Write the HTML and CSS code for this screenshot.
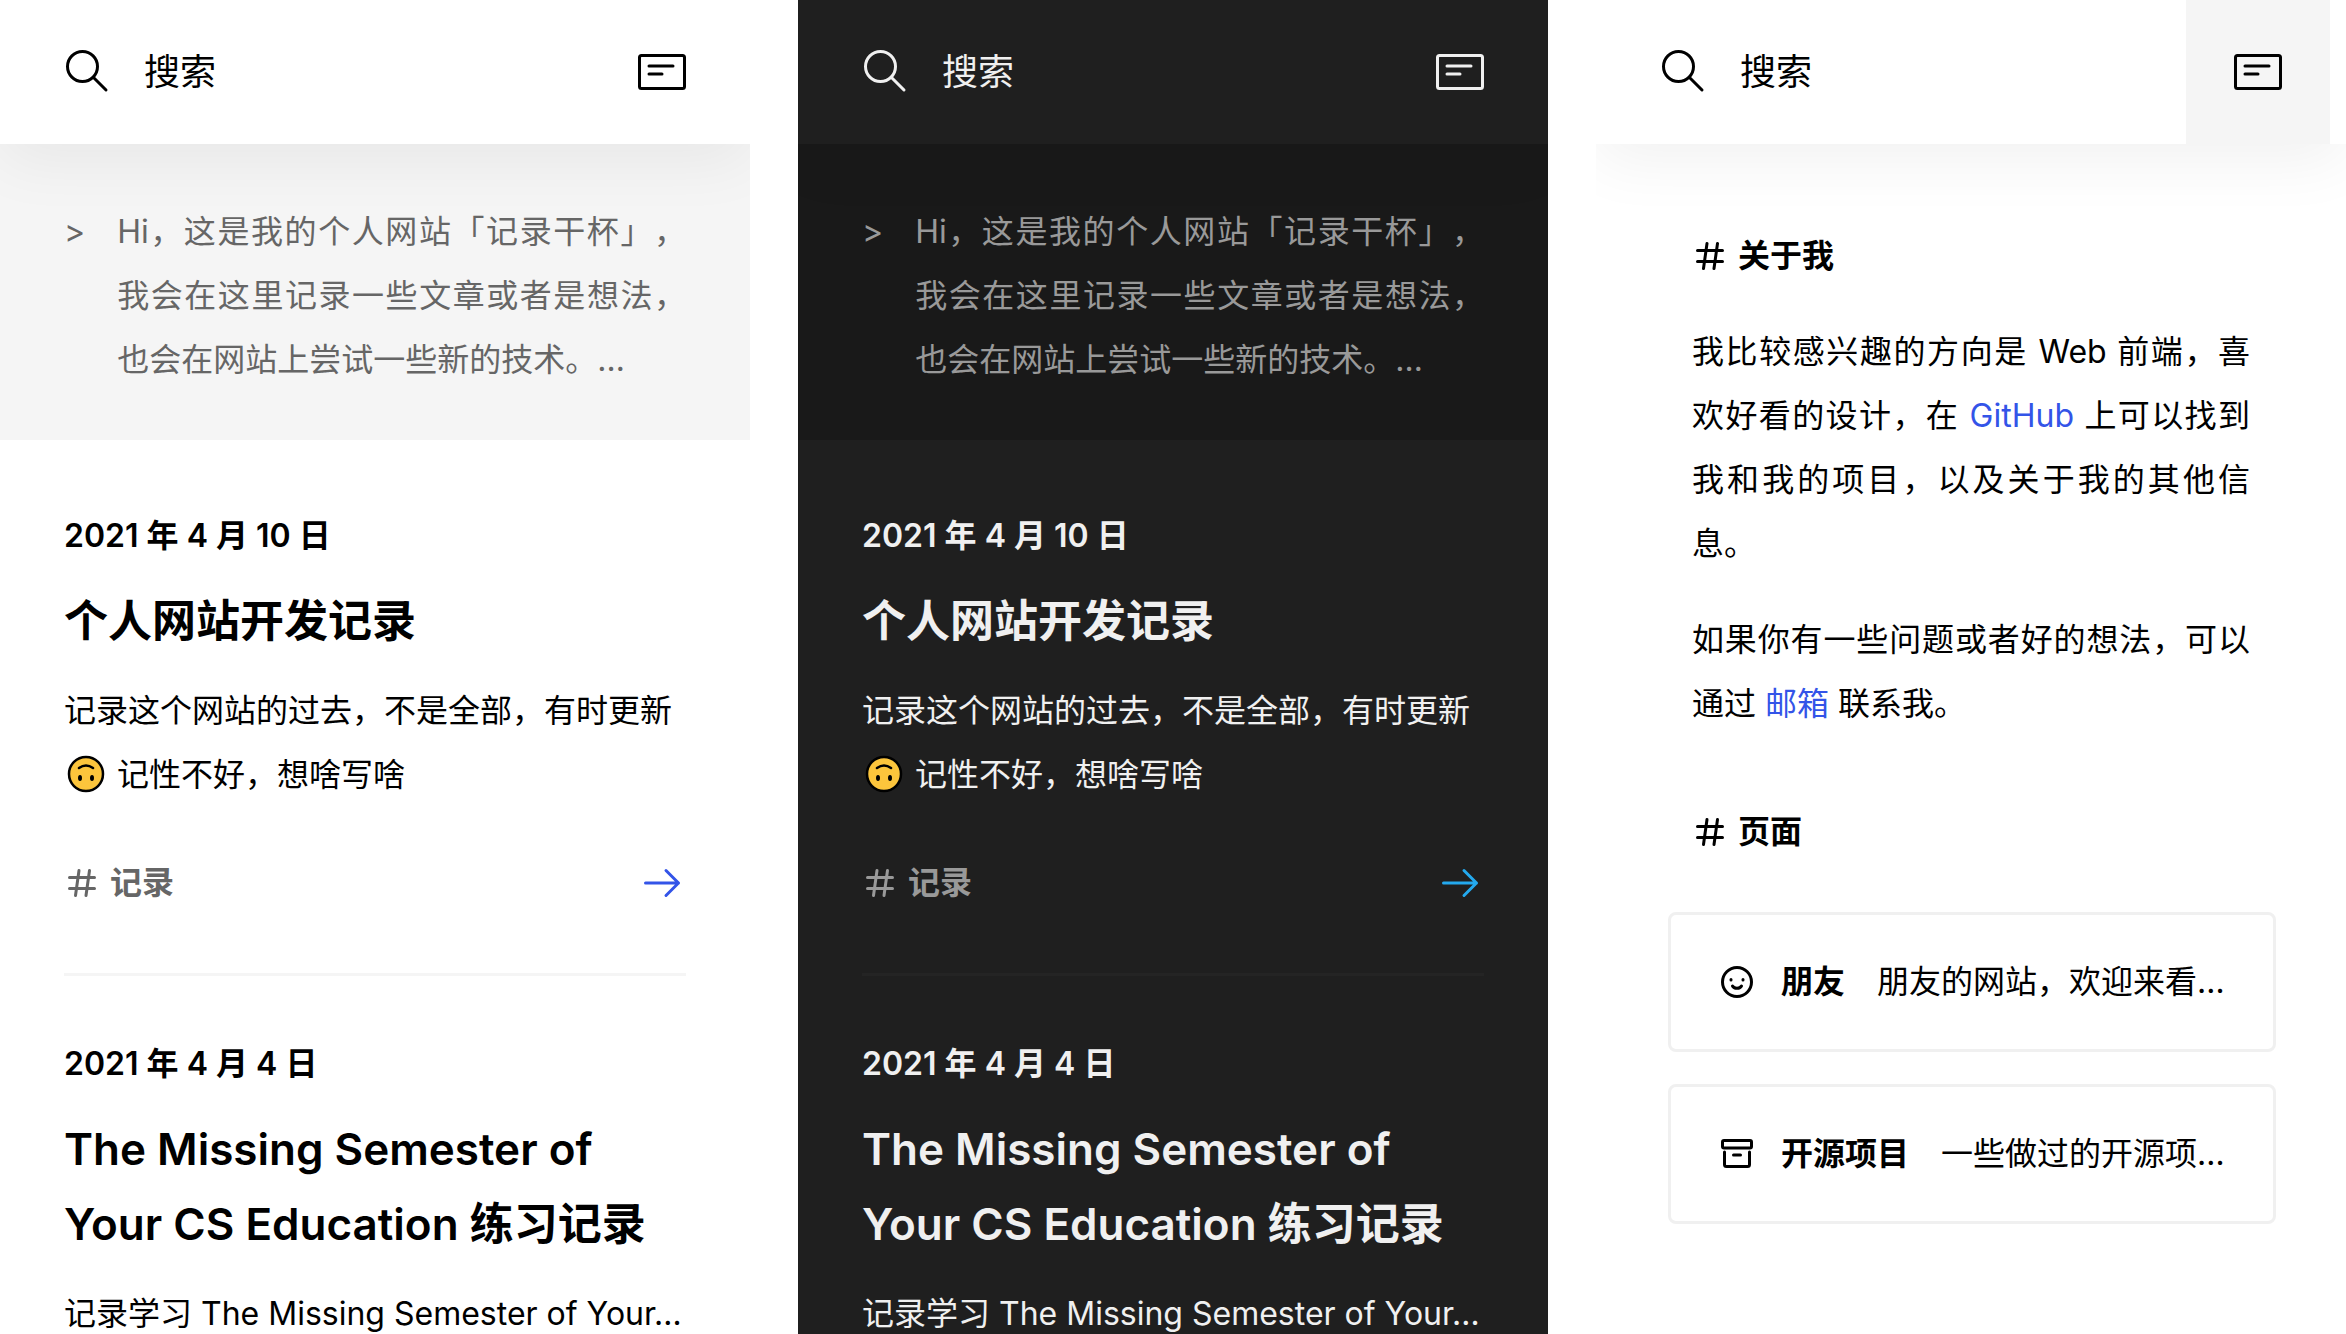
FILE: index.html
```html
<!DOCTYPE html>
<html lang="zh-CN">
<head>
    <meta charset="UTF-8">
    <meta name="viewport" content="width=device-width, initial-scale=1.0">
    <title>记录干杯</title>
    <link rel="stylesheet" href="styles.css">
</head>
<body>
    <!-- shared icons -->
    <svg class="sprite" aria-hidden="true">
        <symbol id="icon-search" viewBox="0 0 48 48">
            <circle cx="18.500" cy="18.500" r="15"/>
            <path d="M29.500 29.500L42 42"/>
        </symbol>
        <symbol id="icon-menu" viewBox="0 0 48 36">
            <rect x="1.5" y="1.5" width="45" height="33" rx="2"/>
            <path d="M11 12H35M11 20H24"/>
        </symbol>
        <symbol id="icon-hash" viewBox="0 0 36 36">
            <path d="M5.500 12.500H30.500M5.500 23.500H30.500M15 5.500L11.500 30.500M25.500 5.500L22 30.500"/>
        </symbol>
        <symbol id="icon-arrow" viewBox="0 0 48 48">
            <path d="M7.500 24H40.500M28 11.500L40.500 24L28 36.500"/>
        </symbol>
        <symbol id="icon-smile" viewBox="0 0 36 36">
            <circle cx="18" cy="18" r="14.5"/>
            <path d="M13.500 22C15 25 21 25 22.500 22M12 15.500V16M24 15.500V16"/>
        </symbol>
        <symbol id="icon-archive" viewBox="0 0 36 36">
            <rect x="3.500" y="4.500" width="29" height="7.500" rx="1.500"/>
            <path d="M5.500 16V28.500Q5.500 30.500 7.500 30.500H28.500Q30.500 30.500 30.500 28.500V16M14.500 19H21.500"/>
        </symbol>
        <symbol id="icon-flip" viewBox="0 0 40 40">
            <circle cx="20" cy="20" r="17" fill="#fcc53c" stroke="#000" stroke-width="2.500"/>
            <path d="M13 14Q20 9 27 14" fill="none" stroke="#000" stroke-width="2.500" stroke-linecap="round"/>
            <ellipse cx="14" cy="24" rx="2" ry="3" fill="#000"/>
            <ellipse cx="26" cy="24" rx="2" ry="3" fill="#000"/>
        </symbol>
    </svg>

    <div class="screens">
        <section class="screen">
            <header class="topbar">
                <button class="search"><svg class="icon icon-search"><use href="#icon-search"/></svg>搜索</button>
                <button class="menu" aria-label="菜单"><svg class="icon icon-menu"><use href="#icon-menu"/></svg></button>
            </header>
            <div class="intro">
                <span>&gt;</span>
                <p>Hi，这是我的个人网站「记录干杯」，我会在这里记录一些文章或者是想法，也会在网站上尝试一些新的技术。…</p>
            </div>
            <main class="posts">
                <article class="post">
                    <time class="date" datetime="2021-04-10">2021 年 4 月 10 日</time>
                    <h2>个人网站开发记录</h2>
                    <p>记录这个网站的过去，不是全部，有时更新 <svg class="emoji"><use href="#icon-flip"/></svg> 记性不好，想啥写啥</p>
                    <footer>
                        <a class="tag" href="#"><svg class="icon icon-hash"><use href="#icon-hash"/></svg>记录</a>
                        <a class="more" href="#" aria-label="阅读"><svg class="icon icon-arrow"><use href="#icon-arrow"/></svg></a>
                    </footer>
                </article>
                <article class="post">
                    <time class="date" datetime="2021-04-04">2021 年 4 月 4 日</time>
                    <h2>The Missing Semester of Your CS Education 练习记录</h2>
                    <p>记录学习 The Missing Semester of Your…</p>
                </article>
            </main>
        </section>

        <section class="screen dark">
            <header class="topbar">
                <button class="search"><svg class="icon icon-search"><use href="#icon-search"/></svg>搜索</button>
                <button class="menu" aria-label="菜单"><svg class="icon icon-menu"><use href="#icon-menu"/></svg></button>
            </header>
            <div class="intro">
                <span>&gt;</span>
                <p>Hi，这是我的个人网站「记录干杯」，我会在这里记录一些文章或者是想法，也会在网站上尝试一些新的技术。…</p>
            </div>
            <main class="posts">
                <article class="post">
                    <time class="date" datetime="2021-04-10">2021 年 4 月 10 日</time>
                    <h2>个人网站开发记录</h2>
                    <p>记录这个网站的过去，不是全部，有时更新 <svg class="emoji"><use href="#icon-flip"/></svg> 记性不好，想啥写啥</p>
                    <footer>
                        <a class="tag" href="#"><svg class="icon icon-hash"><use href="#icon-hash"/></svg>记录</a>
                        <a class="more" href="#" aria-label="阅读"><svg class="icon icon-arrow"><use href="#icon-arrow"/></svg></a>
                    </footer>
                </article>
                <article class="post">
                    <time class="date" datetime="2021-04-04">2021 年 4 月 4 日</time>
                    <h2>The Missing Semester of Your CS Education 练习记录</h2>
                    <p>记录学习 The Missing Semester of Your…</p>
                </article>
            </main>
        </section>

        <section class="screen">
            <header class="topbar">
                <button class="search"><svg class="icon icon-search"><use href="#icon-search"/></svg>搜索</button>
                <button class="menu open" aria-label="菜单"><svg class="icon icon-menu"><use href="#icon-menu"/></svg></button>
            </header>
            <div class="drawer">
                <h3><svg class="icon icon-hash"><use href="#icon-hash"/></svg>关于我</h3>
                <p>我比较感兴趣的方向是 Web 前端，喜欢好看的设计，在 <a href="#">GitHub</a> 上可以找到我和我的项目，以及关于我的其他信息。</p>
                <p>如果你有一些问题或者好的想法，可以通过 <a href="#">邮箱</a> 联系我。</p>
                <h3><svg class="icon icon-hash"><use href="#icon-hash"/></svg>页面</h3>
                <nav class="pages">
                    <a class="page" href="#">
                        <svg class="icon icon-page"><use href="#icon-smile"/></svg>
                        <strong>朋友</strong>
                        <span>朋友的网站，欢迎来看…</span>
                    </a>
                    <a class="page" href="#">
                        <svg class="icon icon-page"><use href="#icon-archive"/></svg>
                        <strong>开源项目</strong>
                        <span>一些做过的开源项…</span>
                    </a>
                </nav>
            </div>
        </section>
    </div>
</body>
</html>
```

FILE: styles.css
```css
* {
    box-sizing: border-box;
}

body {
    margin: 0;
    background: #fff;
    font-family: Inter, "Noto Sans CJK SC", sans-serif;
    font-size: 32px;
    line-height: 64px;
    text-spacing-trim: space-all;
}

h2, h3, p {
    margin: 0;
}

a {
    color: var(--link);
    text-decoration: none;
}

button {
    padding: 0;
    border: none;
    background: none;
    color: inherit;
    font: inherit;
    cursor: pointer;
}

.sprite {
    display: none;
}

.screens {
    display: grid;
    grid-template-columns: repeat(3, 1fr);
    gap: 48px;
    height: 100vh;
    overflow: hidden;
}

.screen {
    --bg: #fff;
    --soft: #f5f5f5;
    --line: #f5f5f5;
    --text: #000;
    --muted: #666;
    --link: #3354e8;
    --shadow: rgba(0, 0, 0, 0.06);
    min-width: 0;
    overflow: hidden;
    background: var(--bg);
    color: var(--text);
}

.dark {
    --bg: #1f1f1f;
    --soft: #191919;
    --line: #242424;
    --text: #f0f0f0;
    --muted: #999;
    --link: #24a9ee;
}

.icon {
    flex: none;
    fill: none;
    stroke: currentColor;
    stroke-width: 3;
    stroke-linecap: round;
    stroke-linejoin: round;
}

/* top bar */
.topbar {
    position: relative;
    display: flex;
    justify-content: space-between;
    height: 144px;
    padding-right: 16px;
    background: var(--bg);
    box-shadow: 0 16px 64px var(--shadow);
}

.search {
    display: flex;
    align-items: center;
    gap: 32px;
    padding-left: 64px;
    font-size: 36px;
}

.icon-search {
    width: 48px;
    height: 48px;
}

.menu {
    display: flex;
    align-items: center;
    justify-content: center;
    width: 144px;
}

.menu.open {
    background: var(--soft);
}

.icon-menu {
    width: 48px;
    height: 36px;
}

/* intro */
.intro {
    display: flex;
    gap: 32px;
    padding: 56px 64px 48px;
    background: var(--soft);
    color: var(--muted);
    text-align: justify;
}

/* posts */
.posts {
    padding: 0 64px;
}

.post {
    padding: 64px 0 58px;
    border-bottom: 3px solid var(--line);
}

.post + .post {
    padding-top: 56px;
}

.date {
    display: block;
    font-weight: 600;
}

.post h2 {
    margin: 16px 0 20px;
    font-size: 44px;
    font-weight: 600;
    line-height: 75px;
}

.emoji {
    width: 40px;
    height: 40px;
    margin: 0 2px;
    vertical-align: -8px;
}

.post footer {
    display: flex;
    align-items: center;
    justify-content: space-between;
    margin-top: 44px;
}

.tag {
    display: flex;
    align-items: center;
    gap: 10px;
    color: var(--muted);
    font-weight: 600;
}

.icon-hash {
    width: 36px;
    height: 36px;
}

.more {
    display: flex;
}

.icon-arrow {
    width: 48px;
    height: 48px;
}

/* drawer */
.drawer {
    padding: 80px 72px;
}

.drawer h3 {
    display: flex;
    align-items: center;
    gap: 10px;
    margin: 0 24px 32px;
    font-size: 32px;
    font-weight: 600;
}

.drawer p {
    margin: 0 24px 32px;
    text-align: justify;
}

.drawer p + h3 {
    margin-top: 64px;
    margin-bottom: 48px;
}

.pages {
    display: grid;
    gap: 32px;
}

.page {
    display: flex;
    align-items: center;
    padding: 35px 48px;
    border: 3px solid #f0f0f0;
    border-radius: 8px;
    color: var(--text);
    white-space: nowrap;
}

.icon-page {
    width: 36px;
    height: 36px;
    margin-right: 26px;
}

.page strong {
    margin-right: 32px;
    font-weight: 600;
}
```
